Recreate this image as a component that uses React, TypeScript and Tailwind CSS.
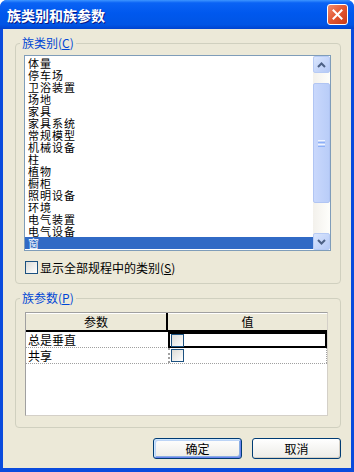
import React from 'react';

// 族类别列表（最后一项为选中状态）
const CATEGORIES = [
  '体量', '停车场', '卫浴装置', '场地', '家具', '家具系统', '常规模型', '机械设备',
  '柱', '植物', '橱柜', '照明设备', '环境', '电气装置', '电气设备', '窗',
];

const PARAMS = [
  { name: '总是垂直', focused: true },
  { name: '共享', focused: false },
];

function XpCheckbox() {
  return (
    <span className="block w-[13px] h-[13px] shrink-0 border border-[#1C5180] bg-linear-to-br from-[#DCDCD7] to-white" />
  );
}

function ScrollArrow({ up }: { up: boolean }) {
  return (
    <div className="h-[17px] w-[17px] rounded-[2px] border border-[#B7CBF5] bg-linear-to-br from-[#DAE6FD] to-[#B5C9F6] flex items-center justify-center">
      <svg width="9" height="6" viewBox="0 0 9 6">
        <path
          d={up ? 'M1 5 L4.5 1.5 L8 5' : 'M1 1 L4.5 4.5 L8 1'}
          fill="none"
          stroke="#4D6185"
          strokeWidth="2"
        />
      </svg>
    </div>
  );
}

function XpButton({ label, isDefault }: { label: string; isDefault?: boolean }) {
  return (
    <button
      className={`w-[89px] h-[21px] rounded-[3px] border border-[#003C74] bg-linear-to-b from-white to-[#ECEBE6] text-[12px] leading-[19px] text-black ${
        isDefault
          ? 'shadow-[inset_1px_1px_0_#CEE7FF,inset_-1px_-1px_0_#6982EE,inset_2px_2px_0_#BCD4F6,inset_-2px_-2px_0_#89ADE4]'
          : 'shadow-[inset_-1px_-1px_0_#D6D0C5]'
      }`}
    >
      {label}
    </button>
  );
}

export default function App() {
  return (
    <div className="w-[354px] h-[472px] flex flex-col rounded-t-[7px] bg-[#0A4BDD] font-['Noto_Sans_CJK_SC',sans-serif] text-black select-none">
      {/* タイトルバー */}
      <div className="h-[29px] shrink-0 rounded-t-[7px] bg-[linear-gradient(180deg,#3D95FF_0%,#0A63F5_10%,#0058EE_45%,#0055E5_85%,#0043CF_100%)] flex items-center pl-[7px]">
        <span className="text-[14px] font-bold text-white leading-[16px] [text-shadow:1px_1px_0_#0A1883]">
          族类别和族参数
        </span>
        <div className="ml-auto mr-[6px] w-[21px] h-[21px] rounded-[3px] border border-white bg-linear-to-br from-[#F08A6C] via-[#E2552F] to-[#C93A17] flex items-center justify-center">
          <svg width="11" height="11" viewBox="0 0 11 11">
            <path d="M1.5 1.5 L9.5 9.5 M9.5 1.5 L1.5 9.5" stroke="white" strokeWidth="2" strokeLinecap="square" />
          </svg>
        </div>
      </div>

      {/* 本体 */}
      <div className="flex-1 mx-[3px] mb-[4px] bg-[#ECE9D8] flex flex-col">
        {/* 族类别 */}
        <fieldset className="mt-[7px] ml-[12px] w-[326px] rounded-[4px] border border-[#D0D0BF] pl-[8px] pt-[5px] pb-[9px]">
          <legend className="ml-[-4px] px-[2px] text-[12px] leading-[14px] text-[#0046D5]">
            族类别(<span className="underline">C</span>)
          </legend>
          <div className="w-[307px] h-[196px] border border-[#7F9DB9] bg-white flex">
            <div className="flex-1 pt-[1px]">
              {CATEGORIES.map((cat, i) => {
                const selected = i === CATEGORIES.length - 1;
                return (
                  <div
                    key={cat}
                    className={`h-[12px] text-[11px] leading-[12px] pl-[3px] whitespace-nowrap tracking-[1px] ${
                      selected ? 'bg-[#316AC5] text-white' : ''
                    }`}
                  >
                    {cat}
                  </div>
                );
              })}
            </div>
            <div className="w-[17px] flex flex-col bg-linear-to-r from-[#F3F1EC] to-[#FEFEFB]">
              <ScrollArrow up />
              <div className="flex-1 pt-[10px]">
                <div className="h-[120px] w-[17px] rounded-[2px] border border-[#B1C5F3] bg-linear-to-r from-[#C9D8FC] to-[#B9CDF8] flex flex-col items-center justify-center gap-[1px]">
                  <span className="block w-[7px] h-[1px] bg-[#EEF4FE]" />
                  <span className="block w-[7px] h-[1px] bg-[#8CB0F8]" />
                  <span className="block w-[7px] h-[1px] bg-[#EEF4FE]" />
                  <span className="block w-[7px] h-[1px] bg-[#8CB0F8]" />
                </div>
              </div>
              <ScrollArrow up={false} />
            </div>
          </div>

          <div className="mt-[10px] ml-[1px] flex items-center gap-[2px] h-[13px]">
            <XpCheckbox />
            <span className="text-[12px] leading-[13px]">
              显示全部规程中的类别(<span className="underline">S</span>)
            </span>
          </div>
        </fieldset>

        {/* 族参数 */}
        <fieldset className="mt-[7px] ml-[12px] w-[326px] rounded-[4px] border border-[#D0D0BF] pl-[9px] pt-[7px] pb-[11px]">
          <legend className="ml-[-5px] px-[2px] text-[12px] leading-[14px] text-[#0046D5]">
            族参数(<span className="underline">P</span>)
          </legend>
          <div className="w-[303px] h-[104px] border border-[#A0A0A0] border-r-[#D4D0C8] border-b-[#D4D0C8] bg-white flex flex-col">
            <div className="h-[19px] flex bg-[#ECE9D8] border-b-2 border-black text-[12px] leading-[17px] shadow-[inset_0_1px_0_white]">
              <div className="w-[142px] text-center border-r-2 border-black">参数</div>
              <div className="flex-1 text-center">值</div>
            </div>
            {PARAMS.map((p) => (
              <div key={p.name} className="h-[16px] flex border-b border-dotted border-[#A0A0A0]">
                <div className="w-[142px] pl-[2px] text-[12px] leading-[15px] whitespace-nowrap">{p.name}</div>
                <div
                  className={`flex-1 flex items-center ${
                    p.focused
                      ? 'border-2 border-black -mb-[1px] pl-[1px]'
                      : 'border-l-2 border-dotted border-[#A0A0A0] border-r pl-[1px]'
                  }`}
                >
                  <XpCheckbox />
                </div>
              </div>
            ))}
          </div>
        </fieldset>

        {/* ボタン */}
        <div className="mt-[10px] pr-[10px] flex justify-end gap-[10px]">
          <XpButton label="确定" isDefault />
          <XpButton label="取消" />
        </div>
      </div>
    </div>
  );
}
